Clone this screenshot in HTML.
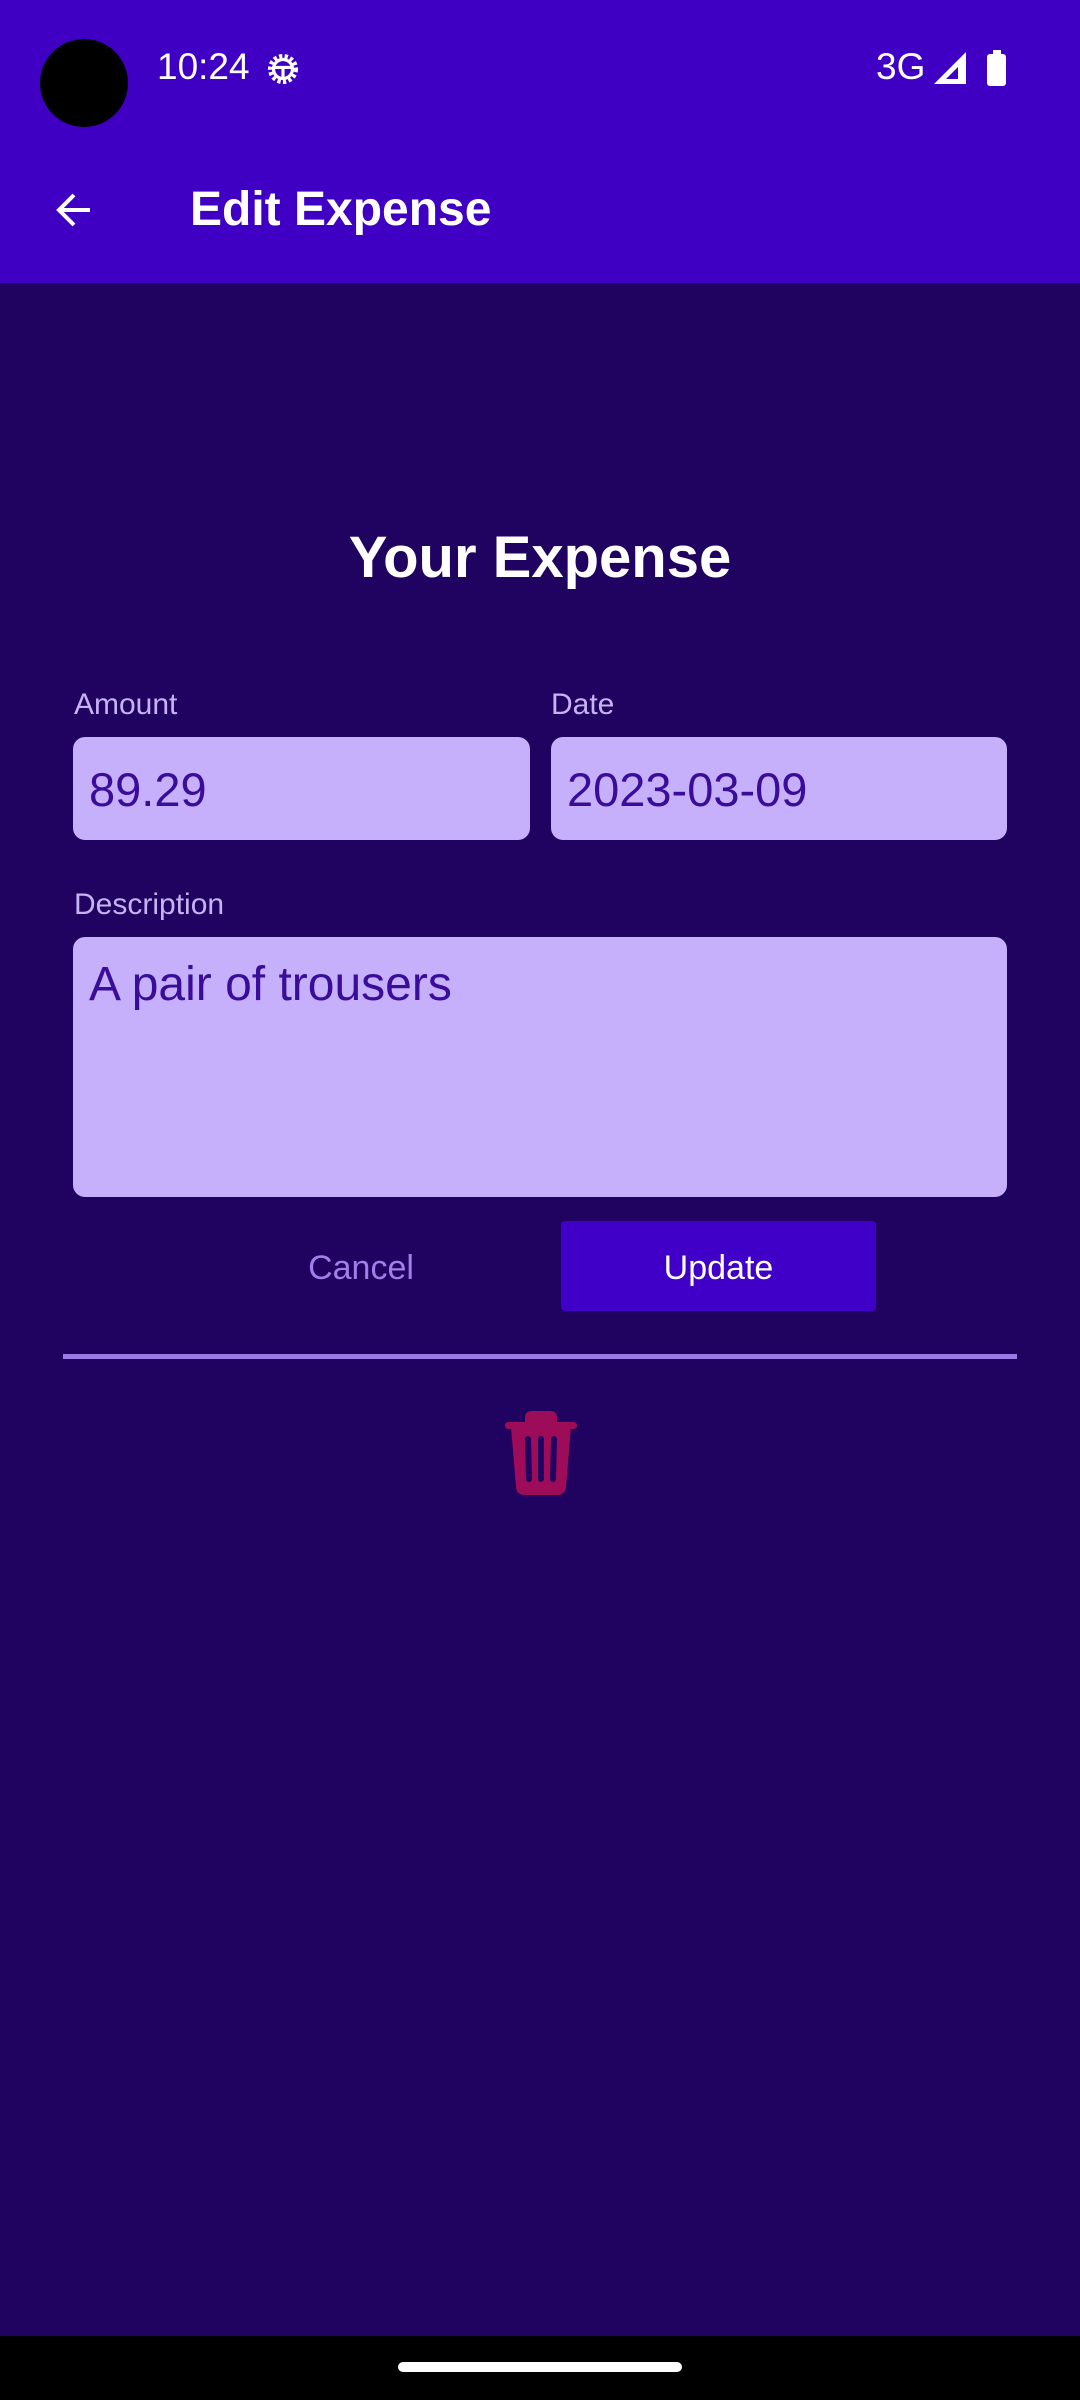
<!DOCTYPE html>
<html><head><meta charset="utf-8"><style>
*{margin:0;padding:0;box-sizing:border-box}
body{width:1080px;height:2400px;background:#200260;font-family:"Liberation Sans",Roboto,sans-serif;position:relative;overflow:hidden}
.abs{position:absolute}
.top{left:0;top:0;width:1080px;height:283px;background:#3f00c3}
.lbl{color:#c6b4f2;font-size:30px}
.box{background:#c7b0fb;border-radius:12px;color:#3a0c9a;font-size:47px;padding-left:16px}
</style></head><body>
<div class="abs top"></div>
<div class="abs" style="left:40px;top:39px;width:88px;height:88px;border-radius:50%;background:#000"></div>
<div class="abs" style="left:157px;top:46px;color:#fff;font-size:37px">10:24</div>
<svg class="abs" style="left:264px;top:50px" width="38" height="38" viewBox="0 0 24 24"><circle cx="12" cy="12" r="8" fill="none" stroke="#fff" stroke-width="3" stroke-dasharray="2 1.5"/><circle cx="12" cy="12" r="6" fill="none" stroke="#fff" stroke-width="2"/><path d="M6 11h12M12 11v7" stroke="#fff" stroke-width="2"/></svg>
<div class="abs" style="left:876px;top:46px;color:#fff;font-size:37px">3G</div>
<svg class="abs" style="left:934px;top:52px" width="32" height="32" viewBox="0 0 32 32"><path d="M32 0V32H0Z" fill="#fff"/><path d="M27 12V27H12Z" fill="#3f00c3"/><rect x="24" y="12" width="4" height="20" fill="#fff"/></svg>
<div class="abs" style="left:987px;top:54px;width:19px;height:32px;background:#fff;border-radius:3px"></div>
<div class="abs" style="left:993px;top:50px;width:8px;height:5px;background:#fff"></div>
<svg class="abs" style="left:50px;top:186px" width="48" height="48" viewBox="0 0 24 24"><path d="M20 12H5M12 4.5L4.5 12 12 19.5" fill="none" stroke="#fff" stroke-width="2"/></svg>
<div class="abs" style="left:190px;top:182px;color:#fff;font-size:48px;font-weight:bold">Edit Expense</div>
<div class="abs" style="left:0;width:1080px;top:524px;text-align:center;color:#fff;font-size:58px;font-weight:bold">Your Expense</div>
<div class="abs lbl" style="left:74px;top:688px">Amount</div>
<div class="abs lbl" style="left:551px;top:688px">Date</div>
<div class="abs box" style="left:73px;top:737px;width:457px;height:103px;line-height:106px">89.29</div>
<div class="abs box" style="left:551px;top:737px;width:456px;height:103px;line-height:106px">2023-03-09</div>
<div class="abs lbl" style="left:74px;top:888px">Description</div>
<div class="abs box" style="left:73px;top:937px;width:934px;height:260px;padding-top:20px;font-size:48px">A pair of trousers</div>
<div class="abs" style="left:261px;width:200px;top:1249px;text-align:center;color:#a080e8;font-size:34px">Cancel</div>
<div class="abs" style="left:561px;top:1221px;width:315px;height:90px;background:#4000c8;border-radius:4px;color:#fff;font-size:34px;text-align:center;line-height:94px">Update</div>
<div class="abs" style="left:63px;top:1354px;width:954px;height:5px;background:#9b7be8"></div>
<svg class="abs" style="left:505px;top:1411px" width="72" height="84" viewBox="0 0 72 84"><path d="M26 0h20a6 6 0 0 1 6 6v6H20V6a6 6 0 0 1 6-6z" fill="#9c0c58"/><rect x="0" y="11" width="72" height="7" rx="3.5" fill="#9c0c58"/><path d="M6 16h60l-5 60a8 8 0 0 1-8 8H19a8 8 0 0 1-8-8z" fill="#9c0c58"/><g stroke="#200260" stroke-width="6" stroke-linecap="round"><path d="M23 28l1 40M36 28v40M49 28l-1 40"/></g></svg>
<div class="abs" style="left:0;top:2336px;width:1080px;height:64px;background:#000"></div>
<div class="abs" style="left:398px;top:2362px;width:284px;height:10px;border-radius:5px;background:#fff"></div>
</body></html>
